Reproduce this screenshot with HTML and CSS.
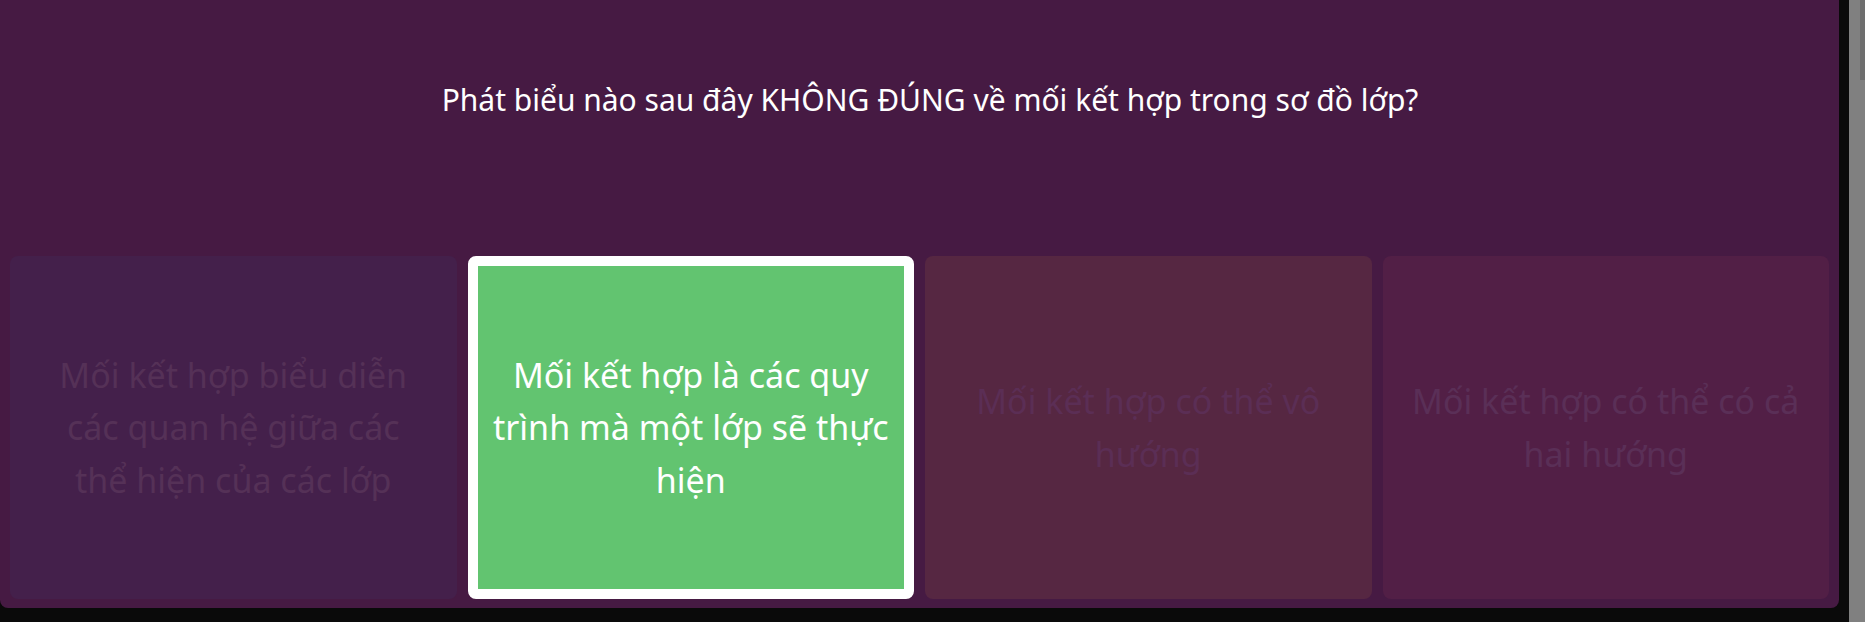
FILE: index.html
```html
<!DOCTYPE html>
<html lang="vi">
<head>
<meta charset="utf-8">
<title>Quiz</title>
<link rel="stylesheet" href="styles.css">
</head>
<body>
<div class="viewport">
  <main class="panel">
    <header class="question">
      <p class="question-text">Phát biểu nào sau đây KHÔNG ĐÚNG về mối kết hợp trong sơ đồ lớp?</p>
    </header>
    <section class="options">
      <div class="option option-1"><span class="option-text">Mối kết hợp biểu diễn các quan hệ giữa các<br>thể hiện của các lớp</span></div>
      <div class="option option-2 selected"><span class="option-text">Mối kết hợp là các quy trình mà một lớp sẽ thực hiện</span></div>
      <div class="option option-3"><span class="option-text">Mối kết hợp có thể vô hướng</span></div>
      <div class="option option-4"><span class="option-text">Mối kết hợp có thể có cả hai hướng</span></div>
    </section>
  </main>
</div>
<div class="scrollbar"><div class="thumb"></div></div>
</body>
</html>
```
FILE: styles.css
```css
html, body {
  margin: 0;
  padding: 0;
  height: 622px;
  overflow: hidden;
}
body {
  background: #0a0a0a;
  display: flex;
  font-family: "Noto Sans", "Open Sans", sans-serif;
}
.viewport {
  width: 1849px;
  height: 622px;
}
.panel {
  width: 1839px;
  height: 608px;
  background: #461a43;
  border-radius: 0 0 8px 8px;
  display: flex;
  flex-direction: column;
  box-sizing: border-box;
}
.question {
  height: 256px;
  box-sizing: border-box;
  padding: 80px 0 0 21px;
  flex: none;
}
.question-text {
  margin: 0;
  text-align: center;
  color: #ffffff;
  font-size: 30px;
  line-height: 40px;
}
.options {
  flex: 1;
  display: grid;
  grid-template-columns: repeat(4, 1fr);
  gap: 11px;
  padding: 0 10px 9px 10px;
}
.option {
  border-radius: 8px;
  border: 10px solid transparent;
  padding: 0 10px;
  display: flex;
  align-items: center;
  justify-content: center;
  text-align: center;
  font-size: 34px;
  line-height: 52.5px;
}
.option-1 { background: #44204b; color: #553157; }
.option-3 { background: #562742; color: #5b2e55; }
.option-4 { background: #521f46; color: #5a2f57; }
.option.selected {
  background: #62c470;
  border-color: #ffffff;
  color: #ffffff;
}
.scrollbar {
  width: 16px;
  height: 622px;
  background: #808080;
  display: flex;
  justify-content: flex-end;
}
.thumb {
  width: 5px;
  height: 80px;
  background: #6e6e6e;
}
```
